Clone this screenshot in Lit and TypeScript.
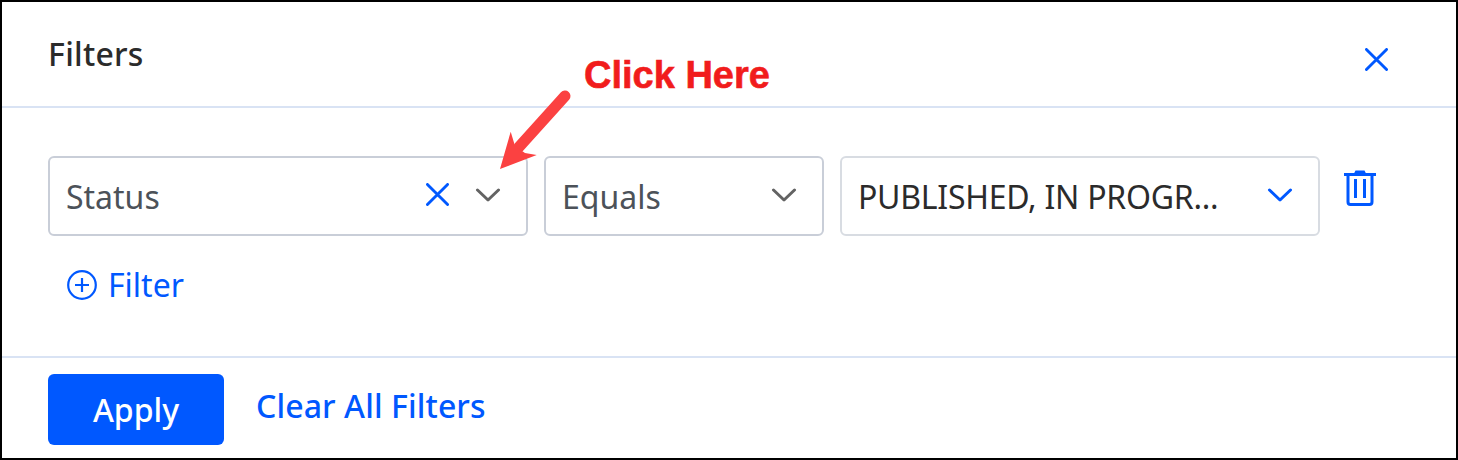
import { LitElement, html, css, svg } from "lit";
import { customElement } from "lit/decorators.js";

const close = (size: number, sw: number) => html`<svg class="ico x" width=${size} height=${size} viewBox="0 0 24 24" fill="none" stroke="#0058ff" stroke-width=${sw} stroke-linecap="round"><path d="M1.5 1.5 22.5 22.5M22.5 1.5 1.5 22.5"/></svg>`;
const chevron = (color: string) => html`<svg class="ico" width="26" height="16" viewBox="0 0 26 16" fill="none" stroke=${color} stroke-width="3" stroke-linecap="round" stroke-linejoin="round"><path d="M2.5 2 13 12 23.5 2"/></svg>`;

@customElement("app-root")
export class AppRoot extends LitElement {
  static styles = css`
    :host { display: block; position: relative; width: 1458px; height: 460px; box-sizing: border-box; border: 2px solid #000; background: #fff; font-family: "Noto Sans", "Open Sans", sans-serif; color: #2b2b2b; overflow: hidden; }
    .ico { display: block; flex: none; }
    .panel { display: flex; flex-direction: column; height: 100%; }
    .head { height: 106px; flex: none; box-sizing: border-box; border-bottom: 2px solid #d9e3f4; display: flex; align-items: flex-start; justify-content: space-between; padding: 32px 68px 0 46px; }
    .title { font-size: 32px; line-height: 40px; font-weight: 500; letter-spacing: 0.25px; color: #2b2b2b; }
    .head .ico { margin-top: 14px; }
    .body { flex: 1; padding: 48px 46px 0; }
    .row { display: flex; gap: 16px; align-items: flex-start; }
    .sel { height: 80px; box-sizing: border-box; border: 2px solid #c9ced8; border-radius: 6px; display: flex; align-items: center; padding: 0 25px 0 16px; font-size: 32px; color: #4c5259; }
    .sel span { flex: 1; white-space: nowrap; }
    .s1 { width: 480px; }
    .s1 .x { margin: 0 26px 4px 0; }
    .s2 { width: 280px; }
    .s3 { width: 480px; border-color: #d8dce2; color: #2b2b2b; }
    .s3 span { letter-spacing: -0.25px; }
    .trash { margin: 14px 0 0 8px; }
    .add { display: flex; align-items: center; gap: 11px; margin: 29px 0 0 19px; font-size: 32px; line-height: 40px; color: #0058ff; }
    .foot { height: 102px; flex: none; box-sizing: border-box; border-top: 2px solid #d9e3f4; display: flex; align-items: flex-start; padding: 16px 0 0 46px; gap: 32px; }
    .apply { width: 176px; height: 71px; border-radius: 6px; background: #0058ff; color: #fff; font-size: 32px; font-weight: 500; display: flex; align-items: center; justify-content: center; }
    .clear { font-size: 32px; font-weight: 500; letter-spacing: 0.1px; line-height: 40px; color: #0058ff; margin-top: 12px; }
    .note { position: absolute; left: 582px; top: 50px; font-family: "Liberation Sans", Arial, sans-serif; font-weight: 700; font-size: 38px; line-height: 46px; color: #f11c1c; -webkit-text-stroke: 0.6px #f11c1c; white-space: nowrap; }
    .arrow { position: absolute; left: -2px; top: -2px; pointer-events: none; }
  `;

  render() {
    return html`
      <div class="panel">
        <div class="head"><div class="title">Filters</div>${close(23, 3)}</div>
        <div class="body">
          <div class="row">
            <div class="sel s1"><span>Status</span>${close(23, 3)}${chevron("#636363")}</div>
            <div class="sel s2"><span>Equals</span>${chevron("#636363")}</div>
            <div class="sel s3"><span>PUBLISHED, IN PROGR...</span>${chevron("#0058ff")}</div>
            <svg class="ico trash" width="32" height="36" viewBox="0 0 32 36" fill="none" stroke="#0058ff" stroke-width="3">
              <path d="M0 4.5H32"/>
              <path d="M10 3.5 11.5 0.5H20.5L22 3.5Z" fill="#0058ff" stroke="none"/>
              <path d="M4 4.5V32a2.5 2.5 0 0 0 2.5 2.5H25.5a2.5 2.5 0 0 0 2.5-2.5V4.5"/>
              <path d="M11.5 9V28M20.5 9V28"/>
            </svg>
          </div>
          <div class="add">
            <svg class="ico" width="30" height="30" viewBox="0 0 30 30" fill="none" stroke="#0058ff" stroke-width="2.2"><circle cx="15" cy="15" r="13.8"/><path d="M8 15H22M15 8V22"/></svg>
            Filter
          </div>
        </div>
        <div class="foot"><div class="apply">Apply</div><div class="clear">Clear All Filters</div></div>
      </div>
      <div class="note">Click Here</div>
      <svg class="arrow" width="1458" height="460" viewBox="0 0 1458 460">
        ${svg`<path d="M565 96 519 147" stroke="#fb4141" stroke-width="11" stroke-linecap="round" fill="none"/><path d="M500 169 510.7 131.7 515 146 525 153 536.7 155Z" fill="#fb4141"/>`}
      </svg>
    `;
  }
}
